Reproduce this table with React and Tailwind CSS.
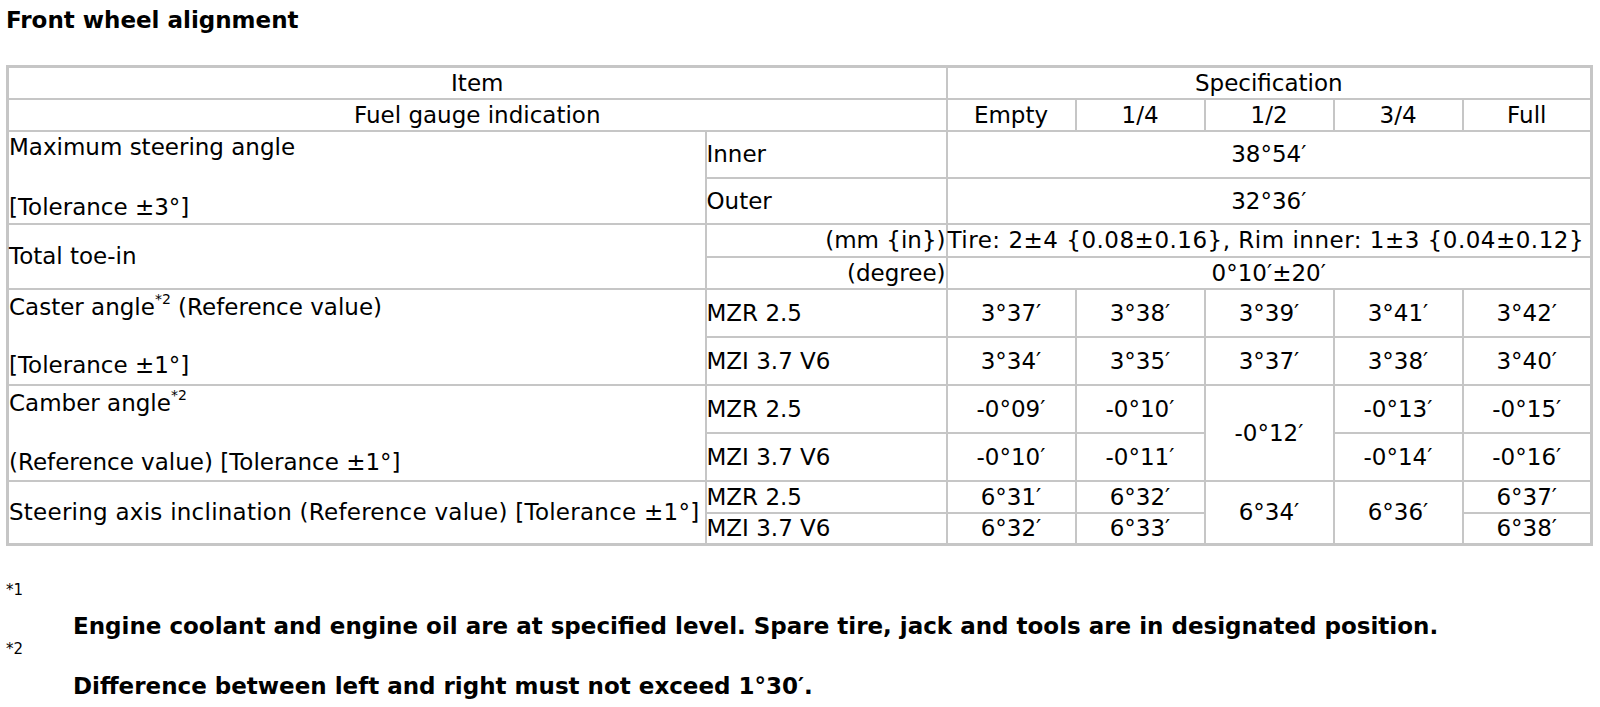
const cell = 'border-2 border-[#c6c6c6] px-0 py-0 leading-[28px]';
const val = `${cell} text-center`;

const Sup = ({ children }) => (
  <sup className="text-[14px] relative -top-[2px] align-super leading-none">{children}</sup>
);

const App = () => {
  return (
    <div className="bg-white min-h-[707px] text-black font-['DejaVu_Sans',Verdana,sans-serif] text-[23px]">
      <h1 className="pl-[6px] pt-[6px] font-bold text-[23px] leading-[28px]">Front wheel alignment</h1>

      <table className="ml-[6px] mt-[31px] table-fixed border-collapse border-[3px] border-[#c6c6c6] w-[1584px]">
        <colgroup>
          <col className="w-[698px]" />
          <col className="w-[241px]" />
          <col className="w-[129px]" />
          <col className="w-[129px]" />
          <col className="w-[129px]" />
          <col className="w-[129px]" />
          <col className="w-[129px]" />
        </colgroup>
        <tbody>
          {/* header rows */}
          <tr className="h-[32px]">
            <td colSpan={2} className={val}>Item</td>
            <td colSpan={5} className={val}>Specification</td>
          </tr>
          <tr className="h-[32px]">
            <td colSpan={2} className={val}>Fuel gauge indication</td>
            <td className={val}>Empty</td>
            <td className={val}>1/4</td>
            <td className={val}>1/2</td>
            <td className={val}>3/4</td>
            <td className={val}>Full</td>
          </tr>

          {/* maximum steering angle */}
          <tr className="h-[47px]">
            <td rowSpan={2} className={`${cell} leading-[30px] align-middle`}>
              <div>Maximum steering angle</div>
              <div className="mt-[30px]">[Tolerance ±3°]</div>
            </td>
            <td className={cell}>Inner</td>
            <td colSpan={5} className={val}>38°54′</td>
          </tr>
          <tr className="h-[46px]">
            <td className={cell}>Outer</td>
            <td colSpan={5} className={val}>32°36′</td>
          </tr>

          {/* toe-in */}
          <tr className="h-[33px]">
            <td rowSpan={2} className={cell}>Total toe-in</td>
            <td className={`${cell} text-right`}>(mm {'{in}'})</td>
            <td colSpan={5} className={`${cell} whitespace-nowrap tracking-[0.5px]`}>Tire: 2±4 {'{0.08±0.16}'}, Rim inner: 1±3 {'{0.04±0.12}'}</td>
          </tr>
          <tr className="h-[32px]">
            <td className={`${cell} text-right`}>(degree)</td>
            <td colSpan={5} className={val}>0°10′±20′</td>
          </tr>

          {/* caster */}
          <tr className="h-[48px]">
            <td rowSpan={2} className={`${cell} leading-[29px] align-middle`}>
              <div>Caster angle<Sup>*2</Sup> (Reference value)</div>
              <div className="mt-[29px]">[Tolerance ±1°]</div>
            </td>
            <td className={cell}>MZR 2.5</td>
            <td className={val}>3°37′</td>
            <td className={val}>3°38′</td>
            <td className={val}>3°39′</td>
            <td className={val}>3°41′</td>
            <td className={val}>3°42′</td>
          </tr>
          <tr className="h-[48px]">
            <td className={cell}>MZI 3.7 V6</td>
            <td className={val}>3°34′</td>
            <td className={val}>3°35′</td>
            <td className={val}>3°37′</td>
            <td className={val}>3°38′</td>
            <td className={val}>3°40′</td>
          </tr>

          {/* camber */}
          <tr className="h-[48px]">
            <td rowSpan={2} className={`${cell} leading-[29px] align-middle`}>
              <div>Camber angle<Sup>*2</Sup></div>
              <div className="mt-[30px]">(Reference value) [Tolerance ±1°]</div>
            </td>
            <td className={cell}>MZR 2.5</td>
            <td className={val}>-0°09′</td>
            <td className={val}>-0°10′</td>
            <td rowSpan={2} className={val}>-0°12′</td>
            <td className={val}>-0°13′</td>
            <td className={val}>-0°15′</td>
          </tr>
          <tr className="h-[48px]">
            <td className={cell}>MZI 3.7 V6</td>
            <td className={val}>-0°10′</td>
            <td className={val}>-0°11′</td>
            <td className={val}>-0°14′</td>
            <td className={val}>-0°16′</td>
          </tr>

          {/* steering axis inclination */}
          <tr className="h-[32px]">
            <td rowSpan={2} className={`${cell} whitespace-nowrap tracking-[0.25px]`}>Steering axis inclination (Reference value) [Tolerance ±1°]</td>
            <td className={cell}>MZR 2.5</td>
            <td className={val}>6°31′</td>
            <td className={val}>6°32′</td>
            <td rowSpan={2} className={val}>6°34′</td>
            <td rowSpan={2} className={val}>6°36′</td>
            <td className={val}>6°37′</td>
          </tr>
          <tr className="h-[32px]">
            <td className={cell}>MZI 3.7 V6</td>
            <td className={val}>6°32′</td>
            <td className={val}>6°33′</td>
            <td className={val}>6°38′</td>
          </tr>
        </tbody>
      </table>

      {/* footnotes */}
      <div className="pl-[6px] mt-[34px] text-[15px] leading-[20px]">*1</div>
      <p className="pl-[73px] mt-[13px] font-bold text-[23px] leading-[26px]">
        Engine coolant and engine oil are at specified level. Spare tire, jack and tools are in designated position.
      </p>
      <div className="pl-[6px] text-[15px] leading-[20px]">*2</div>
      <p className="pl-[73px] mt-[13px] font-bold text-[23px] leading-[28px]">
        Difference between left and right must not exceed 1°30′.
      </p>
    </div>
  );
};

export default App;
